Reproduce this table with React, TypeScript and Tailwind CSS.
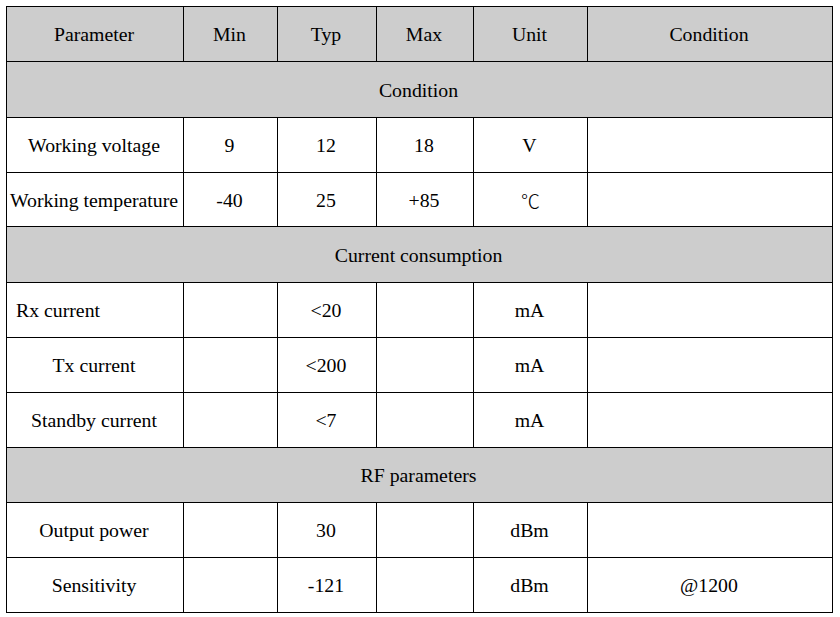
import React from "react";

type Row =
  | { kind: "section"; label: string; h: string }
  | { kind: "data"; cells: string[]; h: string; header?: boolean; leftFirst?: boolean };

const rows: Row[] = [
  { kind: "data", header: true, cells: ["Parameter", "Min", "Typ", "Max", "Unit", "Condition"], h: "h-[54px]" },
  { kind: "section", label: "Condition", h: "h-[55px]" },
  { kind: "data", cells: ["Working voltage", "9", "12", "18", "V", ""], h: "h-[54px]" },
  { kind: "data", cells: ["Working temperature", "-40", "25", "+85", "℃", ""], h: "h-[53px]" },
  { kind: "section", label: "Current consumption", h: "h-[55px]" },
  { kind: "data", leftFirst: true, cells: ["Rx current", "", "<20", "", "mA", ""], h: "h-[54px]" },
  { kind: "data", cells: ["Tx current", "", "<200", "", "mA", ""], h: "h-[54px]" },
  { kind: "data", cells: ["Standby current", "", "<7", "", "mA", ""], h: "h-[54px]" },
  { kind: "section", label: "RF parameters", h: "h-[54px]" },
  { kind: "data", cells: ["Output power", "", "30", "", "dBm", ""], h: "h-[54px]" },
  { kind: "data", cells: ["Sensitivity", "", "-121", "", "dBm", "@1200"], h: "h-[54px]" },
];

export default function App() {
  return (
    <div className="w-[840px] h-[617px] bg-white pt-[6px] pl-[6px]" style={{ fontFamily: '"Liberation Serif", "Times New Roman", "Noto Sans CJK SC", serif' }}>
      <div className="inline-grid grid-cols-[176px_93px_98px_96px_113px_244px] gap-px bg-black p-px text-[19.8px] leading-none text-black">
        {rows.map((r, i) =>
          r.kind === "section" ? (
            <div key={i} className={`col-span-6 ${r.h} bg-[#cdcdcd] flex items-center justify-center pt-[2px] pr-[2px]`}>
              {r.label}
            </div>
          ) : (
            r.cells.map((c, j) => (
              <div
                key={`${i}-${j}`}
                className={`${r.h} ${r.header ? "bg-[#cdcdcd]" : "bg-white"} flex items-center pt-[2px] whitespace-nowrap ${
                  r.leftFirst && j === 0 ? "justify-start pl-[9px]" : "justify-center pr-[2px]"
                }`}
              >
                {c === "℃" ? (
                  <span className="font-light text-[19px] -mr-[2px]" style={{ fontFamily: '"Noto Sans CJK SC", sans-serif' }}>
                    ℃
                  </span>
                ) : (
                  c
                )}
              </div>
            ))
          )
        )}
      </div>
    </div>
  );
}
